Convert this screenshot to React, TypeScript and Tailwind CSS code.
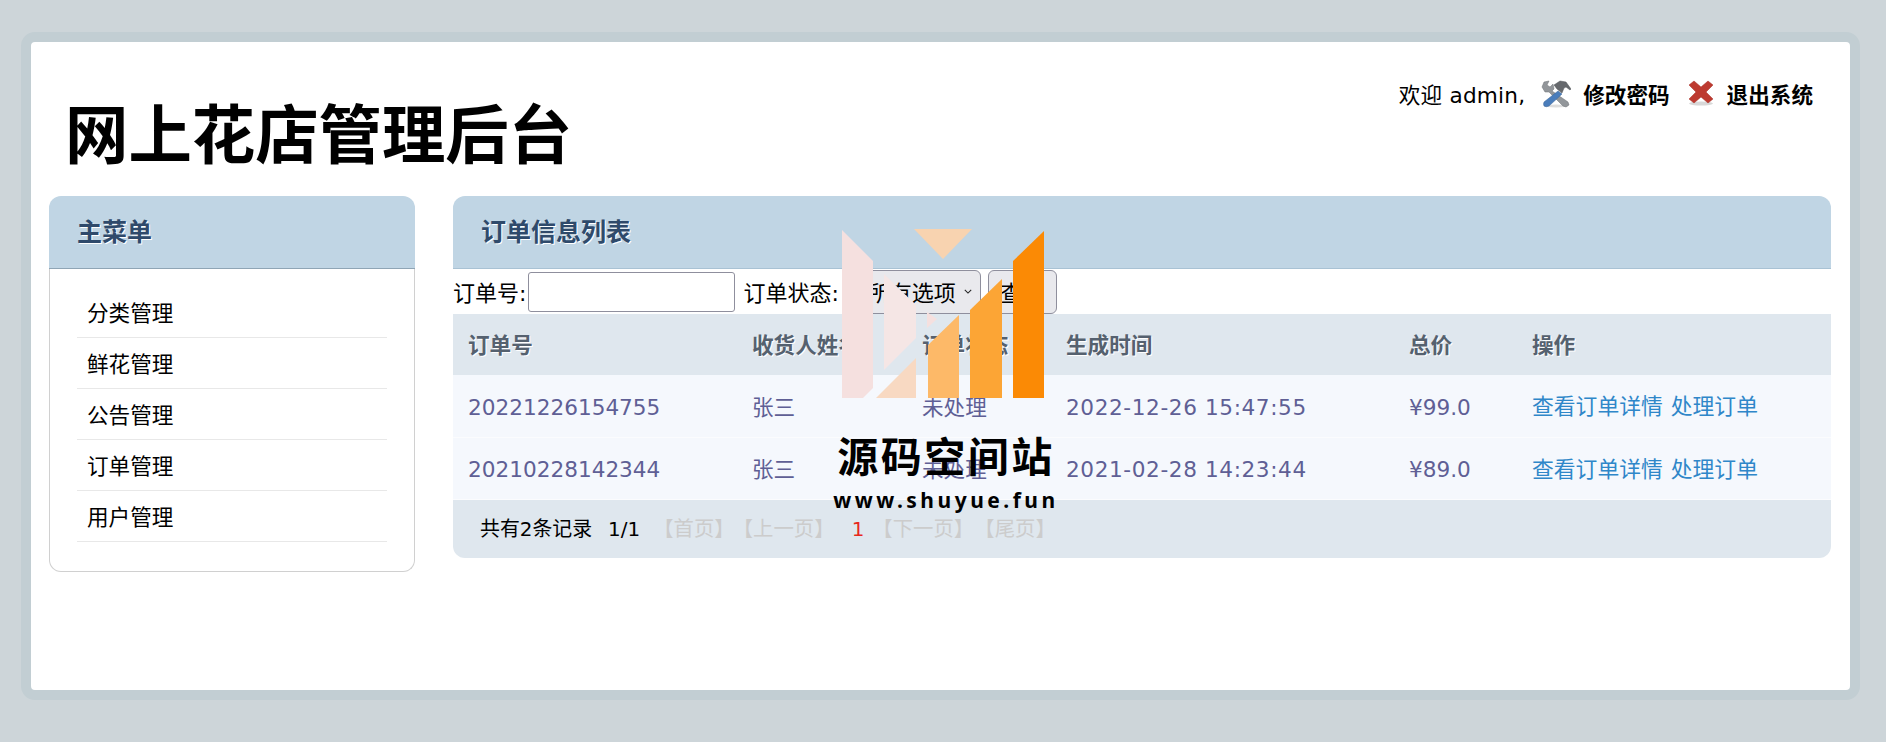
const cjk = "font-['DejaVu_Sans','Noto_Sans_CJK_SC',sans-serif]";

const menus = ["分类管理", "鲜花管理", "公告管理", "订单管理", "用户管理"];

const orders = [
  { no: "20221226154755", name: "张三", state: "未处理", time: "2022-12-26 15:47:55", price: "¥99.0" },
  { no: "20210228142344", name: "张三", state: "未处理", time: "2021-02-28 14:23:44", price: "¥89.0" },
];

function ToolsIcon() {
  return (
    <svg viewBox="0 0 30 28" className="w-[30px] h-[28px] blur-[0.4px]">
      <ellipse cx="15" cy="26" rx="12" ry="1.5" fill="#ddd" />
      {/* wrench */}
      <path d="M1 7 L3 2 L8 1 L6 5 L9 7 L12 4 L13 9 L11 11 L27 22 L28 25 L25 27 L22 26 L8 12 L4 12 Z" fill="#92969a" stroke="#6c7074" strokeWidth="0.5" />
      {/* hammer handle */}
      <path d="M17 11 L21 14 L8 26 Q5 27.5 3 26 Q2 24 3 22 Z" fill="#4a7dbb" stroke="#3a6496" strokeWidth="0.5" />
      {/* hammer head */}
      <path d="M13 5 L19 1 L25 2 L30 9 L29 10 L25 7 L23 8 L21 13 L16 9 Z" fill="#66696d" stroke="#515458" strokeWidth="0.5" />
    </svg>
  );
}

function CloseIcon() {
  return (
    <svg viewBox="0 0 26 26" className="w-[26px] h-[26px] blur-[0.4px]">
      <ellipse cx="13" cy="23.5" rx="12" ry="2" fill="#d8d8d8" />
      <path d="M1 5 L6 1 L13 7 L20 1 L25 5 L18 12 L25 19 L20 23 L13 17 L6 23 L1 19 L8 12 Z" fill="#bd3a30" stroke="#a52d25" strokeWidth="0.5" />
    </svg>
  );
}

function Watermark() {
  return (
    <div className="absolute left-[826px] top-[226px] w-[240px] flex flex-col items-center pointer-events-none">
      <svg viewBox="826 226 240 176" className="w-[240px] h-[176px]">
        <polygon points="914,229 972,229 943,259" fill="#f8d3b0" />
        <polygon points="842,230 873,261 873,388 863,398 842,398" fill="#f5e0df" />
        <polygon points="884,274 916,305 916,338 884,370" fill="#f5e6e5" />
        <polygon points="876,398 916,358 916,398" fill="#f8d9c2" />
        <polygon points="927,312 937,319 927,328" fill="#f5e0df" />
        <polygon points="928,345 959,315 959,398 928,398" fill="#fdb968" />
        <polygon points="970,310 1002,279 1002,398 970,398" fill="#fca535" />
        <polygon points="1013,261 1044,231 1044,398 1013,398" fill="#fb8a05" />
      </svg>
      <div className="mt-[24px] text-[41px] leading-[56px] font-bold tracking-[2.5px] text-black font-['Noto_Sans_CJK_SC',sans-serif] whitespace-nowrap">
        源码空间站
      </div>
      <div className="mt-[4px] text-[21px] leading-[28px] font-bold tracking-[3.5px] text-black font-['Noto_Sans',sans-serif] whitespace-nowrap">
        www.shuyue.fun
      </div>
    </div>
  );
}

export default function App() {
  return (
    <div className={`relative h-[742px] bg-[#cdd5d9] pt-[32px] pl-[21px] pr-[26px] text-[21.6px] text-black overflow-hidden ${cjk}`}>
      <div className="h-[668px] rounded-[14px] border-[10px] border-[#c2ced3] bg-white">
        <div className="h-full rounded-[6px] px-[18px]">
          {/* top */}
          <div className="h-[154px] flex justify-between">
            <h1 className="pt-[52px] pl-[16px] text-[63.4px] leading-[84px] font-bold whitespace-nowrap">
              网上花店管理后台
            </h1>
            <div className="pt-[38px] flex items-start">
              <span className="leading-[32px] mr-[16px] tracking-[0.2px]">欢迎 admin,</span>
              <ToolsIcon />
              <a className="ml-[12px] leading-[32px] font-bold mr-[18px]">修改密码</a>
              <CloseIcon />
              <a className="ml-[13px] leading-[32px] font-bold mr-[19px]">退出系统</a>
            </div>
          </div>

          <div className="flex gap-[38px] items-start">
            {/* sidebar */}
            <div className="w-[366px]">
              <div className="h-[73px] rounded-t-[12px] bg-[#c0d5e4] border-b border-[#8fa5b5] pl-[28px] pt-[2px] flex items-center text-[25px] font-bold text-[#2f4a6b] [text-shadow:1px_1px_0_#fff]">
                主菜单
              </div>
              <ul className="border border-t-0 border-[#d0d0d0] rounded-b-[12px] pt-[18px] pb-[29px] px-[27px]">
                {menus.map((m) => (
                  <li key={m} className="h-[51px] leading-[49px] pt-[2px] pl-[10px] border-b border-[#e8e8e8]">
                    {m}
                  </li>
                ))}
              </ul>
            </div>

            {/* main */}
            <div className="w-[1378px]">
              <div className="h-[73px] rounded-t-[12px] bg-[#c0d5e4] border-b border-[#a9c2d4] pl-[28px] pt-[2px] flex items-center text-[25px] font-bold text-[#2f4a6b] [text-shadow:1px_1px_0_#fff]">
                订单信息列表
              </div>
              <div className="h-[45px] flex items-center text-[22px]">
                <span className="pt-[3px]">订单号:</span>
                <input className="ml-[2px] w-[207px] h-[40px] border border-[#8f8f9d] rounded-[3px] bg-white" />
                <span className="ml-[8px] pt-[3px]">订单状态:</span>
                <div className="ml-[20px] w-[122px] h-[44px] bg-[#e9e9ed] border border-[#8f8f9d] rounded-[6px] flex items-center justify-between pl-[8px] pr-[8px] whitespace-nowrap">
                  <span className="pt-[3px]">所有选项</span>
                  <svg viewBox="0 0 10 6" className="w-[8px] h-[5px]">
                    <path d="M1 1 L5 5 L9 1" fill="none" stroke="#222" strokeWidth="1.3" />
                  </svg>
                </div>
                <button className="ml-[7px] w-[69px] h-[44px] pt-[3px] bg-[#e9e9ed] border border-[#8f8f9d] rounded-[6px]">
                  查询
                </button>
              </div>
              <table className="w-full table-fixed border-collapse">
                <colgroup>
                  <col className="w-[284px]" />
                  <col className="w-[170px]" />
                  <col className="w-[144px]" />
                  <col className="w-[343px]" />
                  <col className="w-[123px]" />
                  <col className="w-[314px]" />
                </colgroup>
                <thead>
                  <tr className="h-[61px] bg-[#dfe7ee] text-left text-[#55616f] [text-shadow:1px_1px_0_#fff]">
                    <th className="pl-[15px] pt-[4px] font-bold">订单号</th>
                    <th className="pl-[15px] pt-[4px] font-bold whitespace-nowrap">收货人姓名</th>
                    <th className="pl-[15px] pt-[4px] font-bold">订单状态</th>
                    <th className="pl-[15px] pt-[4px] font-bold">生成时间</th>
                    <th className="pl-[15px] pt-[4px] font-bold">总价</th>
                    <th className="pl-[15px] pt-[4px] font-bold">操作</th>
                  </tr>
                </thead>
                <tbody>
                  {orders.map((o) => (
                    <tr key={o.no} className="h-[62px] bg-[#f5f8fd] border-b border-[#fbfcfe] text-[#5f5f95]">
                      <td className="pl-[15px] pt-[4px]">{o.no}</td>
                      <td className="pl-[15px] pt-[4px]">{o.name}</td>
                      <td className="pl-[15px] pt-[4px]">{o.state}</td>
                      <td className="pl-[15px] pt-[4px] whitespace-nowrap tracking-[0.6px]">{o.time}</td>
                      <td className="pl-[15px] pt-[4px]">{o.price}</td>
                      <td className="pl-[15px] pt-[4px] text-[#2f87c9] text-[21.8px] whitespace-nowrap [word-spacing:1px]">
                        <a>查看订单详情</a> <a>处理订单</a>
                      </td>
                    </tr>
                  ))}
                </tbody>
              </table>
              <div className="h-[58px] rounded-b-[12px] bg-[#dfe7ee] pl-[27px] pt-[2px] flex items-center text-[19.9px] whitespace-nowrap">
                <span>共有2条记录</span>
                <span className="ml-[16px]">1/1</span>
                <span className="ml-[13px] text-[20.4px] text-[#cccccc]">【首页】</span>
                <span className="-ml-[2px] text-[20.4px] text-[#cccccc]">【上一页】</span>
                <span className="ml-[17px] text-[#e8281c]">1</span>
                <span className="ml-[8px] text-[20.4px] text-[#cccccc]">【下一页】</span>
                <span className="text-[20.4px] text-[#cccccc]">【尾页】</span>
              </div>
            </div>
          </div>
        </div>
      </div>
      <Watermark />
    </div>
  );
}
